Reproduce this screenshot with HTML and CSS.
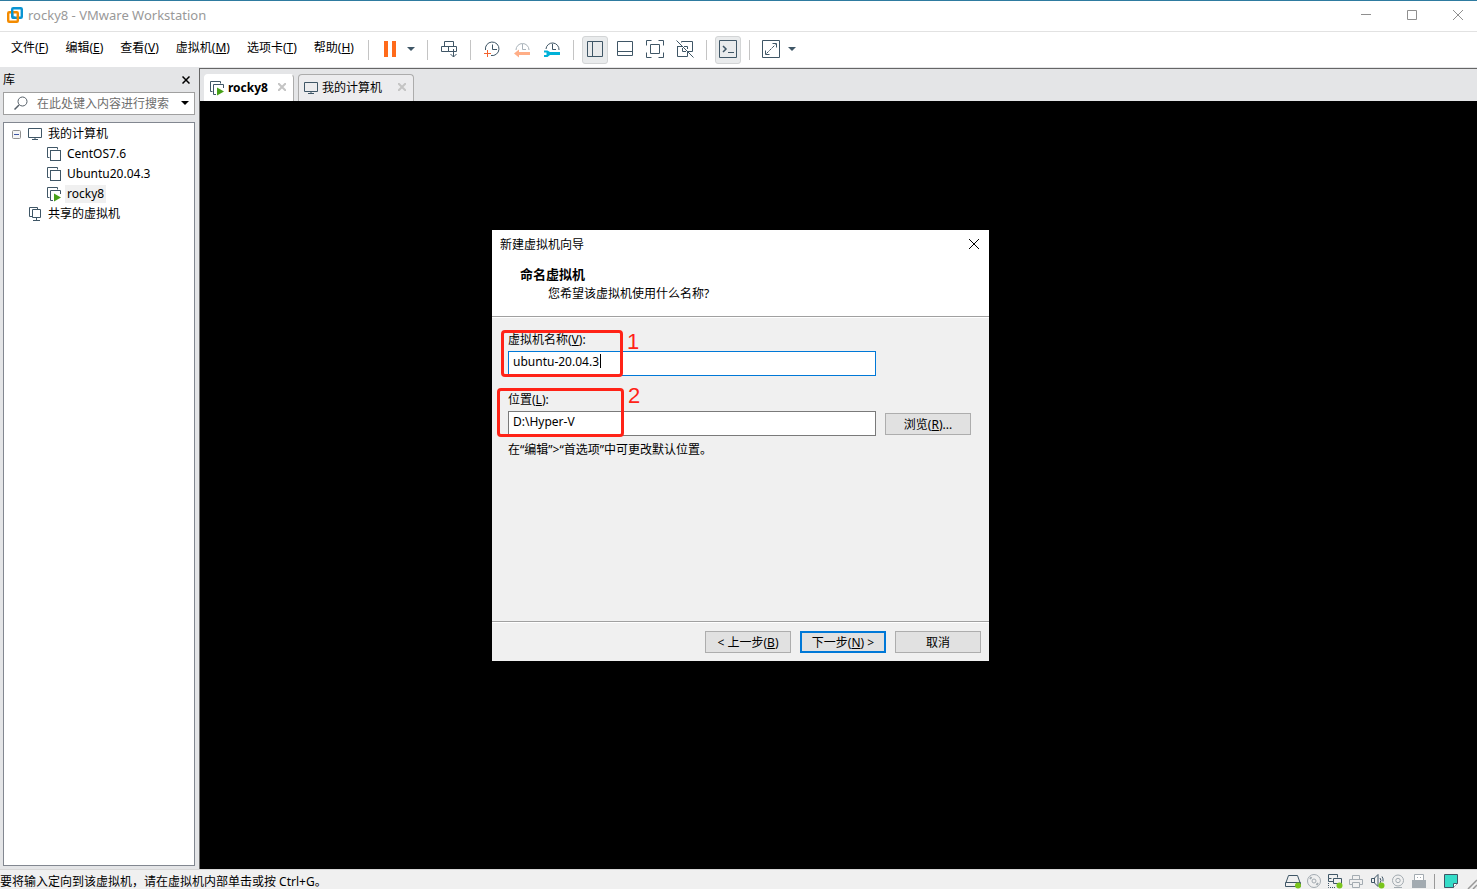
FILE: index.html
```html
<!DOCTYPE html>
<html lang="zh-CN">
<head>
  <meta charset="UTF-8" />
  <meta name="viewport" content="width=device-width, initial-scale=1.0" />
  <title>rocky8 - VMware Workstation</title>
  <link rel="stylesheet" href="styles.css">
</head>
<body>

  <!-- shared icons -->
  <svg class="hidden">
    <symbol id="i-vm" viewBox="0 0 16 16">
      <path d="M3.5 11.5h-2v-10h10v2" fill="none" stroke="#3f5666"/>
      <rect x="4.500" y="4.500" width="10" height="10" fill="#fff" stroke="#3f5666"/>
    </symbol>
    <symbol id="i-vm-on" viewBox="0 0 16 16">
      <path d="M3.5 11.500h-2v-10h10v2M7 14.500H4.500v-10h10V8" fill="none" stroke="#3f5666"/>
      <path d="M8 7.500l7 4-7 4z" fill="#46a017"/>
    </symbol>
    <symbol id="i-pc" viewBox="0 0 16 16">
      <path d="M1.500 2.500h13v9h-13zM8 12v2M5 13.500h6" fill="none" stroke="#3f5666"/>
    </symbol>
  </svg>

  <div class="app">
    <header class="titlebar">
      <svg class="logo" width="16" height="16" viewBox="0 0 16 16" fill="none" stroke-width="2.400">
        <rect x="5.200" y="1.200" width="9.600" height="9.600" rx="1" stroke="#0a94d2"/>
        <rect x="1.200" y="5.200" width="9.600" height="9.600" rx="1" stroke="#f38b00"/>
        <path d="M5.200 9.500V4M5.500 10.800H8" stroke="#0a94d2"/>
      </svg>
      <h1 class="app-title">rocky8 - VMware Workstation</h1>
      <div class="window-buttons">
        <button type="button" aria-label="最小化"><svg width="12" height="12"><path d="M1 5.500h10"/></svg></button>
        <button type="button" aria-label="最大化"><svg width="12" height="12"><path d="M1.500 1.500h9v9h-9z"/></svg></button>
        <button type="button" aria-label="关闭"><svg width="12" height="12"><path d="M1 1l10 10M11 1L1 11"/></svg></button>
      </div>
    </header>

    <div class="menubar">
      <nav class="menu">
        <button type="button">文件(<u>F</u>)</button>
        <button type="button">编辑(<u>E</u>)</button>
        <button type="button">查看(<u>V</u>)</button>
        <button type="button">虚拟机(<u>M</u>)</button>
        <button type="button">选项卡(<u>T</u>)</button>
        <button type="button">帮助(<u>H</u>)</button>
      </nav>
      <div class="toolbar">
        <div class="group">
          <div class="split">
            <button type="button" class="tool" aria-label="挂起"><svg width="18" height="18"><path d="M3 1h4v16H3zM11 1h4v16h-4z" fill="#ff6a1a"/></svg></button>
            <button type="button" class="drop" aria-label="电源选项"><svg width="8" height="4"><path d="M0 0h8L4 4z" fill="#3f5666"/></svg></button>
          </div>
        </div>
        <div class="group">
          <button type="button" class="tool" aria-label="发送 Ctrl+Alt+Del"><svg class="line" width="18" height="18"><path d="M4.500 1.500h9v5h-9zM1.500 6.500h7v5h-7zM8.500 6.500h8v5h-8z"/><path d="M13.500 9v8M10.500 14l3 3 3-3"/></svg></button>
        </div>
        <div class="group">
          <button type="button" class="tool" aria-label="拍摄快照"><svg class="line" width="18" height="18"><path d="M2.500 10a6.800 6.800 0 1 1 5.500 5.500M9.500 4.500v5H14"/><path d="M1 13.500h7M4.500 10v7" stroke="#f4622c"/></svg></button>
          <button type="button" class="tool" aria-label="恢复快照"><svg class="line" width="18" height="18"><path d="M3 10a6.500 6.500 0 1 1 13 0M9.500 4v5.500H13" stroke="#aab3ba"/><path d="M1 13.500l5-4v2.500h11v3H6v2.500z" fill="#ffae87" stroke="none"/></svg></button>
          <button type="button" class="tool" aria-label="管理快照"><svg class="line" width="18" height="18"><path d="M3 9a6.500 6.500 0 1 1 13 1M9.500 4v5.500H13"/><path d="M1 10.500h3.500L7 12h10v3H7l-2.500 2H1v-2h2.500v-2.500H1z" fill="#00b1d8" stroke="none"/></svg></button>
        </div>
        <div class="group">
          <button type="button" class="tool on" aria-label="显示库"><svg class="line" width="18" height="18"><path d="M1.500 1.500h15v15h-15zM6.500 1.500v15"/></svg></button>
          <button type="button" class="tool" aria-label="显示缩略图栏"><svg class="line" width="18" height="18"><path d="M1.500 1.500h15v14h-15zM1.500 11.500h15"/></svg></button>
          <button type="button" class="tool" aria-label="全屏"><svg class="line" width="18" height="18"><path d="M.5 5.500v-5h5M12.500.5h5v5M17.500 12.500v5h-5M5.500 17.500h-5v-5M4.500 4.500h9v9h-9z"/></svg></button>
          <button type="button" class="tool" aria-label="Unity 模式"><svg class="line" width="18" height="18"><path d="M5.500 1.500h11v10h-5M1.500 6v10.500h10v-5M1.500 6.500h5M5.500 1.500v1M8 6.500h3.500V9M6.500 8v3.500H10M.5.5l17 17"/></svg></button>
        </div>
        <div class="group">
          <button type="button" class="tool on" aria-label="控制台视图"><svg class="line" width="18" height="18"><path d="M.5.5h17v17H.5zM9 12.500h6"/><path d="M4 6l3 3-3 3" stroke-width="1.500"/></svg></button>
        </div>
        <div class="group">
          <div class="split">
            <button type="button" class="tool" aria-label="自由拉伸"><svg class="line" width="18" height="18"><path d="M.5.5h17v17H.5zM10.500 3.500h4v4M3.500 10.500v4h4"/><path d="M4.500 13.500l9-9" stroke-dasharray="3 1"/></svg></button>
            <button type="button" class="drop" aria-label="拉伸选项"><svg width="8" height="4"><path d="M0 0h8L4 4z" fill="#3f5666"/></svg></button>
          </div>
        </div>
      </div>
    </div>

    <div class="workspace">
      <aside class="library">
        <div class="library-head">
          <h2>库</h2>
          <button type="button" aria-label="关闭库"><svg width="8" height="8"><path d="M.5.5l7 7M7.500.5l-7 7" stroke="#000" stroke-width="1.500"/></svg></button>
        </div>
        <div class="search">
          <svg width="14" height="14" fill="none" stroke="#555f68"><circle cx="8.500" cy="5.500" r="4.500"/><path d="M5 9l-4.500 4.500" stroke-width="1.500"/></svg>
          <input type="text" placeholder="在此处键入内容进行搜索" aria-label="搜索">
          <button type="button" aria-label="搜索选项"><svg width="8" height="4"><path d="M0 0h8L4 4z"/></svg></button>
        </div>
        <ul class="tree">
          <li>
            <div class="node">
              <svg class="toggle" width="9" height="9" fill="none"><rect x=".5" y=".5" width="8" height="8" rx="1" fill="#f4f4f4" stroke="#919191"/><path d="M2 4.500h5" stroke="#3d55a5"/></svg>
              <svg class="icon"><use href="#i-pc"/></svg>
              <span class="name">我的计算机</span>
            </div>
            <ul>
              <li class="node"><svg class="icon"><use href="#i-vm"/></svg><span class="name">CentOS7.6</span></li>
              <li class="node"><svg class="icon"><use href="#i-vm"/></svg><span class="name">Ubuntu20.04.3</span></li>
              <li class="node"><svg class="icon"><use href="#i-vm-on"/></svg><span class="name selected">rocky8</span></li>
            </ul>
          </li>
          <li class="node shared">
            <svg class="icon" viewBox="0 0 16 16" fill="none" stroke="#3f5666"><path d="M5 10.500H2.500v-9h8V3M5.500 3.500h8v8h-8zM9.500 11.500v3M6 14.500h7"/></svg>
            <span class="name">共享的虚拟机</span>
          </li>
        </ul>
      </aside>

      <main class="view">
        <div class="tabs">
          <div class="tab active">
            <svg class="icon"><use href="#i-vm-on"/></svg>
            <span>rocky8</span>
            <button type="button" aria-label="关闭 rocky8"><svg width="8" height="8"><path d="M0 0l8 8M8 0L0 8"/></svg></button>
          </div>
          <div class="tab wide">
            <svg class="icon"><use href="#i-pc"/></svg>
            <span>我的计算机</span>
            <button type="button" aria-label="关闭 我的计算机"><svg width="8" height="8"><path d="M0 0l8 8M8 0L0 8"/></svg></button>
          </div>
        </div>
        <div class="screen"></div>
      </main>
    </div>

    <footer class="statusbar">
      <p>要将输入定向到该虚拟机，请在虚拟机内部单击或按 Ctrl+G。</p>
      <div class="devices">
        <svg width="16" height="16" fill="none" stroke="#3f5666"><path d="M1 8.500L3.500 1.500h9L15 8.500M.5 8.500h15v4H.5z"/><circle cx="13" cy="11.500" r="3" fill="#7ac51c" stroke="none"/></svg>
        <svg width="16" height="16" fill="none" stroke="#a3abb1"><circle cx="8" cy="7" r="6.500"/><circle cx="8" cy="7" r="2"/><path d="M4 5l1.500-2M12 9l-1.500 2" stroke-width="2"/></svg>
        <svg width="16" height="16" fill="none" stroke="#3f5666"><path d="M4.500 4.500H1.500v-4h9v3M1.500 4.500v3h5M6.500 4.500h8v5h-8zM10.500 10v2"/><path d="M1.500 9v4.500H9" stroke-dasharray="1 1"/><circle cx="12.500" cy="11.500" r="3" fill="#7ac51c" stroke="none"/></svg>
        <svg width="16" height="16" fill="none" stroke="#a3abb1"><path d="M4.500 5.500V1.500h7v4M4 10.500H1.500v-5h13v5H12M4.500 8.500h7v5h-7z"/></svg>
        <svg width="16" height="16" fill="none" stroke="#3f5666"><path d="M2.500 4.500H5l4-4v12l-4-4H2.500zM5.500 4v5M11 4q2 2.500 0 5M13 2.500q1.500 2 1 5"/><circle cx="12.500" cy="11.500" r="3" fill="#7ac51c" stroke="none"/></svg>
        <svg width="16" height="16" fill="none" stroke="#a3abb1"><circle cx="8" cy="6.500" r="5.500"/><circle cx="8" cy="6.500" r="2.200"/><path d="M4 13.500h8"/></svg>
        <svg width="16" height="16"><path d="M3.500.5h9v6h-9z" fill="#fff" stroke="#a3abb1"/><path d="M6 3h1v1H6zM9 3h1v1H9z" fill="#a3abb1"/><path d="M1 6h14v8H1z" fill="#a3abb1"/></svg>
        <span class="divider"></span>
        <svg width="16" height="16"><path d="M1.500.5h13v9l-4 4h-9z" fill="#35dcc8" stroke="#3f5666"/><path d="M10.500 13.500v-4h4" fill="#fff" stroke="#3f5666"/></svg>
        <svg width="13" height="16" fill="none" stroke="#999" stroke-width="1.500"><path d="M4 15l9-9M9 15l4-4"/></svg>
      </div>
    </footer>
  </div>

  <div class="overlay">
    <form class="dialog" role="dialog" aria-labelledby="dialog-title">
      <div class="dialog-top">
        <div class="dialog-titlebar">
          <span id="dialog-title">新建虚拟机向导</span>
          <button type="button" aria-label="关闭"><svg width="12" height="12"><path d="M1 1l10 10M11 1L1 11" stroke="#000"/></svg></button>
        </div>
        <h2>命名虚拟机</h2>
        <p>您希望该虚拟机使用什么名称?</p>
      </div>

      <div class="dialog-body">
        <div class="field">
          <label for="vm-name">虚拟机名称(<u>V</u>):</label>
          <div class="row">
            <input class="focused" type="text" id="vm-name" name="name" value="ubuntu-20.04.3">
            <span class="caret"></span>
          </div>
          <span class="mark mark-name"></span>
          <span class="mark-number">1</span>
        </div>
        <div class="field">
          <label for="vm-path">位置(<u>L</u>):</label>
          <div class="row">
            <input type="text" id="vm-path" name="location" value="D:\Hyper-V">
            <button type="button" class="btn">浏览(<u>R</u>)...</button>
          </div>
          <span class="mark mark-path"></span>
          <span class="mark-number">2</span>
        </div>
        <p class="note">在“编辑”&gt;“首选项”中可更改默认位置。</p>
      </div>

      <div class="dialog-footer">
        <button type="button" class="btn">&lt; 上一步(<u>B</u>)</button>
        <button type="submit" class="btn primary">下一步(<u>N</u>) &gt;</button>
        <button type="button" class="btn">取消</button>
      </div>
    </form>
  </div>

</body>
</html>
```
FILE: styles.css
```css
* {
  box-sizing: border-box;
}
body {
  margin: 0;
  font-family: "Noto Sans", "Noto Sans CJK SC", sans-serif;
  font-size: 12px;
  line-height: 18px;
  color: #000;
}
h1, h2, p, ul {
  margin: 0;
  padding: 0;
}
h1, h2 {
  font-size: 12px;
  font-weight: normal;
}
ul {
  list-style: none;
}
svg {
  display: block;
  flex: none;
}
button {
  display: flex;
  align-items: center;
  justify-content: center;
  padding: 0;
  border: none;
  background: none;
  font: inherit;
  color: inherit;
}
input {
  font: inherit;
}
u {
  text-underline-offset: 1px;
}
.hidden {
  display: none;
}
.icon {
  width: 16px;
  height: 16px;
}
.app {
  display: flex;
  flex-direction: column;
  height: 100vh;
  background-color: #e4e5e7;
}

/* title bar */
.titlebar {
  display: flex;
  align-items: center;
  height: 32px;
  padding: 0 0 2px 7px;
  background-color: #fff;
  border-top: 1px solid #2e7ba0;
  border-bottom: 1px solid #e2e2e2;
  overflow: hidden;
}
.app-title {
  flex: 1;
  margin-left: 5px;
  font-size: 13px;
  color: #999;
}
.window-buttons {
  display: flex;
  margin-right: -4px;
}
.window-buttons button {
  width: 46px;
  height: 28px;
}
.window-buttons path {
  fill: none;
  stroke: #8f8f8f;
}

/* menu and toolbar */
.menubar {
  display: flex;
  align-items: center;
  height: 35px;
  background-color: #fff;
}
.menu {
  display: flex;
  flex: 0 0 360px;
  gap: 1px;
  min-width: 0;
  padding: 0 0 4px 3px;
}
.menu button {
  padding: 0 8px;
  white-space: nowrap;
}
.toolbar, .group, .split {
  display: flex;
  align-items: center;
}
.group {
  gap: 4px;
}
.group::before {
  content: "";
  width: 1px;
  height: 20px;
  margin: 0 4px 0 8px;
  background-color: #c4c4c4;
}
.tool {
  width: 26px;
  height: 28px;
  padding-bottom: 2px;
  border-radius: 3px;
}
.tool.on {
  background-color: #e9ebec;
  border: 1px solid #d3d5d6;
}
.drop {
  width: 16px;
  height: 28px;
  padding-bottom: 2px;
}
.line {
  fill: none;
  stroke: #3f5666;
}

/* library */
.workspace {
  display: flex;
  flex: 1;
  min-height: 0;
}
.library {
  display: flex;
  flex-direction: column;
  width: 199px;
  padding: 0 4px 3px 3px;
}
.library-head {
  display: flex;
  justify-content: space-between;
  align-items: center;
  height: 25px;
  padding-right: 5px;
}
.search {
  display: flex;
  align-items: center;
  height: 23px;
  margin-bottom: 7px;
  padding: 0 5px 0 10px;
  background-color: #fff;
  border: 1px solid #a0a0a0;
}
.search svg {
  margin-bottom: 1px;
}
.search input {
  flex: 1;
  min-width: 0;
  margin-left: 9px;
  padding: 0;
  border: none;
  outline: none;
}
.search input::placeholder {
  color: #6d6d6d;
}
.tree {
  flex: 1;
  padding-top: 1px;
  background-color: #fff;
  border: 1px solid #828790;
}
.tree ul {
  padding-left: 42px;
}
.node {
  display: flex;
  align-items: center;
  height: 20px;
}
.toggle {
  margin: 0 6px 0 8px;
}
.name {
  margin-left: 3px;
  padding: 0 2px;
}
.selected {
  background-color: #f0f0f0;
}
.shared {
  padding-left: 23px;
}

/* tabs and console */
.view {
  display: flex;
  flex: 1;
  flex-direction: column;
  margin-top: 1px;
  border-top: 1px solid #666;
  border-left: 1px solid #666;
}
.tabs {
  display: flex;
  gap: 4px;
  padding: 5px 0 0 4px;
}
.tab {
  display: flex;
  align-items: center;
  width: 90px;
  height: 27px;
  padding: 0 7px 0 4px;
  border: 1px solid #acacac;
  border-bottom: none;
  border-radius: 4px 4px 0 0;
}
.tab span {
  flex: 1;
  margin-left: 3px;
}
.tab button {
  padding-bottom: 2px;
}
.tab button path {
  stroke: #c4c4c4;
  stroke-width: 2;
}
.tab.wide {
  width: 116px;
  background-color: #ececee;
}
.tab.active {
  background-color: #fff;
  border-color: #fff #acacac #fff #fff;
  font-weight: bold;
}
.screen {
  flex: 1;
  background-color: #000;
}

/* status bar */
.statusbar {
  display: flex;
  justify-content: space-between;
  align-items: center;
  height: 20px;
  padding-top: 4px;
  background-color: #f0f0f0;
  border-top: 1px solid #d7d7d7;
  overflow: hidden;
}
.devices {
  display: flex;
  align-items: center;
  gap: 5px;
}
.divider {
  width: 1px;
  height: 16px;
  margin: 0 3px 0 2px;
  background-color: #999;
}

/* new virtual machine wizard */
.overlay {
  position: fixed;
  inset: 0;
  display: grid;
  place-items: center;
  padding: 2px 0 0 4px;
}
.dialog {
  width: 497px;
  background-color: #f0f0f0;
}
.dialog-top {
  height: 87px;
  background-color: #fff;
  border-bottom: 1px solid #a0a0a0;
}
.dialog-titlebar {
  display: flex;
  justify-content: space-between;
  align-items: center;
  height: 28px;
  padding: 0 9px 0 8px;
}
.dialog-titlebar span {
  padding-top: 2px;
}
.dialog-top h2 {
  margin: 7px 0 2px 28px;
  font-size: 13px;
  font-weight: bold;
}
.dialog-top p {
  margin-left: 56px;
}
.dialog-body {
  min-height: 305px;
  padding: 13px 18px 0 16px;
  border-top: 1px solid #fff;
  border-bottom: 1px solid #a0a0a0;
}
.field {
  position: relative;
  margin-bottom: 15px;
}
.field label {
  display: block;
  margin-bottom: 2px;
}
.row {
  display: flex;
  align-items: center;
  gap: 9px;
}
.field input {
  width: 368px;
  height: 25px;
  padding: 0 4px 5px;
  background-color: #fff;
  border: 1px solid #7a7a7a;
  outline: none;
}
.field input.focused {
  border-color: #0078d7;
}
.caret {
  position: absolute;
  left: 92px;
  top: 23px;
  width: 1px;
  height: 14px;
  background-color: #000;
}
.mark {
  position: absolute;
  border: 3px solid #ff2317;
  border-radius: 4px;
}
.mark-name {
  left: -7px;
  top: -1px;
  width: 122px;
  height: 47px;
}
.mark-path {
  left: -11px;
  top: -3px;
  width: 127px;
  height: 49px;
}
.mark-number {
  position: absolute;
  left: 119px;
  top: -1px;
  font-family: "Liberation Sans", sans-serif;
  font-size: 22px;
  line-height: 24px;
  color: #ff2317;
}
.mark-path + .mark-number {
  left: 120px;
  top: -7px;
}
.note {
  margin-top: -10px;
}
.btn {
  width: 86px;
  height: 22px;
  padding-top: 2px;
  background-color: #e1e1e1;
  border: 1px solid #adadad;
}
.btn.primary {
  border: 2px solid #0078d7;
}
.dialog-footer {
  display: flex;
  justify-content: flex-end;
  gap: 9px;
  padding: 8px;
  border-top: 1px solid #fff;
}
```
